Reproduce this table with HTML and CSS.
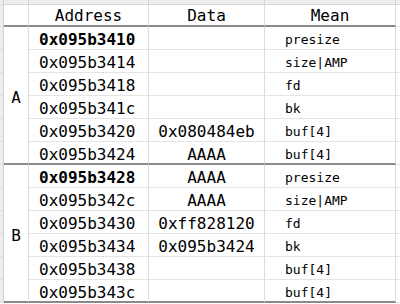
FILE: index.html
```html
<!DOCTYPE html>
<html>
<head>
<meta charset="utf-8">
<link rel="stylesheet" href="styles.css">
</head>
<body>
<div class="sheet">
  <div class="c strip top"></div><div class="c top"></div><div class="c top"></div><div class="c top"></div><div class="c top"></div><div class="c top last"></div>

  <div class="c strip"></div><div class="c hd"></div><div class="c hd ctr">Address</div><div class="c hd ctr">Data</div><div class="c hd ctr">Mean</div><div class="c out"></div>

  <div class="c strip"></div><div class="c label end">A</div><div class="c addr b">0x095b3410</div><div class="c data"></div><div class="c mean">presize</div><div class="c out"></div>
  <div class="c strip"></div><div class="c addr">0x095b3414</div><div class="c data"></div><div class="c mean">size|AMP</div><div class="c out"></div>
  <div class="c strip"></div><div class="c addr">0x095b3418</div><div class="c data"></div><div class="c mean">fd</div><div class="c out"></div>
  <div class="c strip"></div><div class="c addr">0x095b341c</div><div class="c data"></div><div class="c mean">bk</div><div class="c out"></div>
  <div class="c strip"></div><div class="c addr">0x095b3420</div><div class="c data">0x080484eb</div><div class="c mean">buf[4]</div><div class="c out"></div>
  <div class="c strip"></div><div class="c addr end">0x095b3424</div><div class="c data end">AAAA</div><div class="c mean end">buf[4]</div><div class="c out"></div>

  <div class="c strip"></div><div class="c label end">B</div><div class="c addr b">0x095b3428</div><div class="c data">AAAA</div><div class="c mean">presize</div><div class="c out"></div>
  <div class="c strip"></div><div class="c addr">0x095b342c</div><div class="c data">AAAA</div><div class="c mean">size|AMP</div><div class="c out"></div>
  <div class="c strip"></div><div class="c addr">0x095b3430</div><div class="c data">0xff828120</div><div class="c mean">fd</div><div class="c out"></div>
  <div class="c strip"></div><div class="c addr">0x095b3434</div><div class="c data">0x095b3424</div><div class="c mean">bk</div><div class="c out"></div>
  <div class="c strip"></div><div class="c addr">0x095b3438</div><div class="c data"></div><div class="c mean">buf[4]</div><div class="c out"></div>
  <div class="c strip"></div><div class="c addr end">0x095b343c</div><div class="c data end"></div><div class="c mean end">buf[4]</div><div class="c out"></div>
</div>
</body>
</html>
```
FILE: styles.css
```css
* { box-sizing: border-box; }
html, body { margin: 0; padding: 0; background: #ffffff; }
body { width: 400px; height: 304px; overflow: hidden; }

.sheet {
  display: grid;
  grid-template-columns: 4px 25px 120px 116px 131px 4px;
  grid-template-rows: 5px 22px repeat(12, 23px);
  font-family: "DejaVu Sans Mono", "Liberation Mono", monospace;
  font-size: 16px;
  color: #000000;
}

.c {
  border-right: 1px solid #dcdcdc;
  border-bottom: 1px solid #e4e4e4;
  white-space: nowrap;
  overflow: hidden;
  padding-top: 3px;
  line-height: 19px;
}

.top {
  background: #ededed;
  border-bottom: 1px solid #d4d4d4;
  border-right: 1px solid #d8d8d8;
  padding: 0;
}
.top.last { border-right: none; }

.strip {
  background: #ededed;
  border-right: 1px solid #d0d0d0;
  border-bottom: 1px solid #dcdcdc;
}

.out { border-right: none; }

.hd {
  border-bottom: 2px solid #8a8a8a;
  padding-top: 1px;
}

.ctr { text-align: center; }

.label {
  grid-row: span 6;
  display: flex;
  align-items: center;
  justify-content: center;
  padding-top: 4px;
}

.addr { padding-left: 10px; }
.b { font-weight: bold; }

.data { text-align: center; }

.mean {
  font-size: 13px;
  padding-left: 20px;
}

.end { border-bottom: 2px solid #8a8a8a; }
```
